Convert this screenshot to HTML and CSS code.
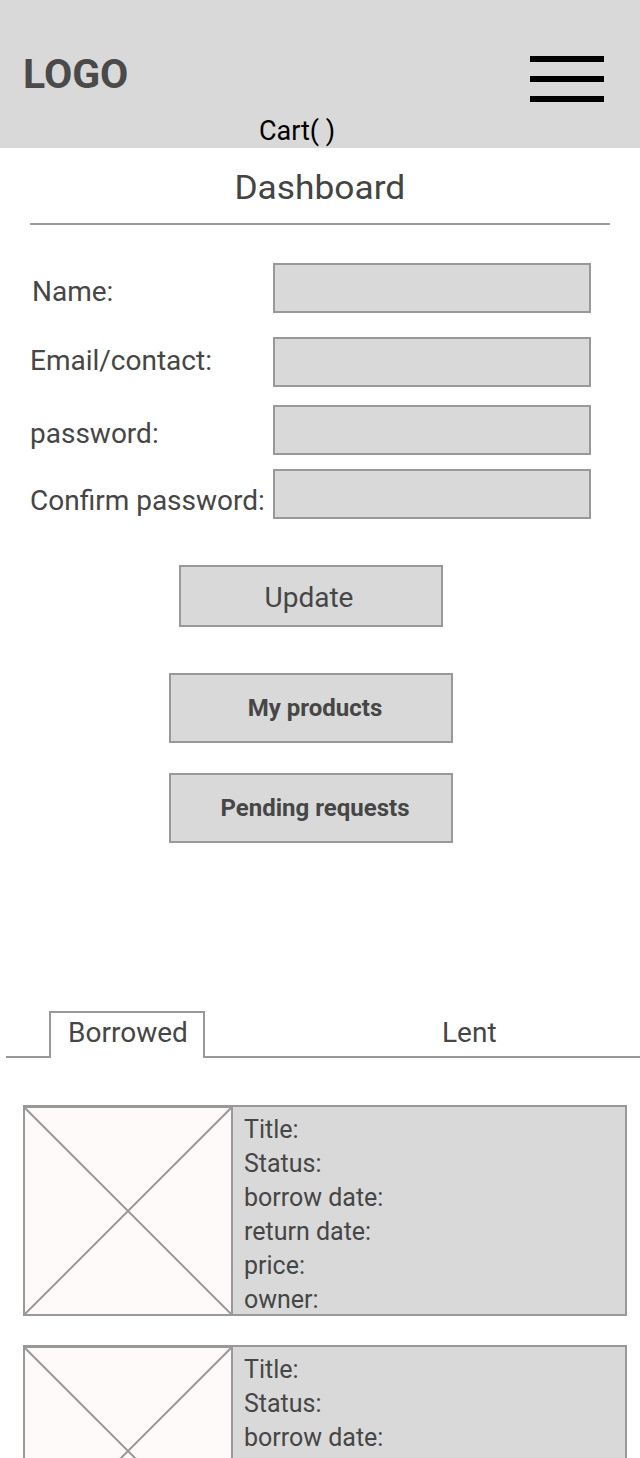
FILE: index.html
```html
<!DOCTYPE html>
<html lang="en">
<head>
<meta charset="utf-8">
<title>Dashboard</title>
<link rel="stylesheet" href="styles.css">
</head>
<body>
<header class="topbar">
  <div class="topbar-row">
    <div class="logo">LOGO</div>
    <div class="burger" aria-label="Menu"><span></span><span></span><span></span></div>
  </div>
  <div class="cart">Cart( )</div>
</header>
<main>
  <div class="heading"><h1 class="heading-title">Dashboard</h1></div>

  <form class="profile-form">
    <div class="field field-name"><label class="field-label">Name:</label><div class="field-input"></div></div>
    <div class="field field-email"><label class="field-label">Email/contact:</label><div class="field-input"></div></div>
    <div class="field field-password"><label class="field-label">password:</label><div class="field-input"></div></div>
    <div class="field field-confirm"><label class="field-label">Confirm password:</label><div class="field-input"></div></div>
  </form>

  <div class="actions">
    <button class="btn btn-update" type="button">Update</button>
    <button class="btn btn-nav btn-products" type="button">My products</button>
    <button class="btn btn-nav btn-pending" type="button">Pending requests</button>
  </div>

  <div class="tabs">
    <div class="tab tab-active">Borrowed</div>
    <div class="tab tab-plain">Lent</div>
  </div>

  <div class="cards">
    <div class="card">
      <div class="thumb">
        <svg class="thumb-x" viewBox="0 0 100 100" preserveAspectRatio="none">
          <line x1="0" y1="0" x2="100" y2="100" stroke="#999" stroke-width="2" vector-effect="non-scaling-stroke"/>
          <line x1="100" y1="0" x2="0" y2="100" stroke="#999" stroke-width="2" vector-effect="non-scaling-stroke"/>
        </svg>
      </div>
      <div class="info">
        <div>Title:</div>
        <div>Status:</div>
        <div>borrow date:</div>
        <div>return date:</div>
        <div>price:</div>
        <div>owner:</div>
      </div>
    </div>
    <div class="card">
      <div class="thumb">
        <svg class="thumb-x" viewBox="0 0 100 100" preserveAspectRatio="none">
          <line x1="0" y1="0" x2="100" y2="100" stroke="#999" stroke-width="2" vector-effect="non-scaling-stroke"/>
          <line x1="100" y1="0" x2="0" y2="100" stroke="#999" stroke-width="2" vector-effect="non-scaling-stroke"/>
        </svg>
      </div>
      <div class="info">
        <div>Title:</div>
        <div>Status:</div>
        <div>borrow date:</div>
        <div>return date:</div>
        <div>price:</div>
        <div>owner:</div>
      </div>
    </div>
  </div>
</main>
</body>
</html>
```
FILE: styles.css
```css
html, body {
  margin: 0;
  padding: 0;
}
body {
  font-family: Roboto, "Liberation Sans", sans-serif;
  color: #464646;
  background: #fff;
}

/* ---------- top bar ---------- */
.topbar {
  background: #d9d9d9;
  height: 148px;
  box-sizing: border-box;
  padding-top: 54px;
}
.topbar-row {
  display: flex;
  justify-content: space-between;
  align-items: flex-start;
  padding: 0 36px 0 23px;
}
.logo {
  font-weight: 700;
  font-size: 41px;
  line-height: 40px;
  color: #4a4a4a;
}
.burger {
  display: flex;
  flex-direction: column;
  gap: 14px;
  margin-top: 2px;
}
.burger span {
  display: block;
  width: 74px;
  height: 6px;
  background: #000;
}
.cart {
  margin-top: 16px;
  font-size: 27px;
  line-height: 27px;
  color: #000;
  text-align: center;
  padding-right: 46px;
}

/* ---------- heading ---------- */
.heading {
  margin: 25px 30px 0;
  padding-bottom: 20px;
  border-bottom: 2px solid #999;
  text-align: center;
}
.heading-title {
  display: inline-block;
  margin: 0;
  font-size: 33px;
  line-height: 30px;
  font-weight: 400;
  color: #444;
  transform: scaleX(1.07);
}

/* ---------- form ---------- */
.profile-form {
  padding: 38px 49px 0 30px;
  margin: 0;
}
.field {
  display: flex;
  align-items: flex-start;
}
.field-label {
  flex: 0 0 243px;
  font-size: 28px;
  line-height: 28px;
  margin-top: 15px;
  white-space: nowrap;
}
.field-input {
  box-sizing: border-box;
  width: 318px;
  height: 50px;
  border: 2px solid #999;
  background: #d9d9d9;
}
.field-name .field-label {
  padding-left: 2px;
  flex-basis: 241px;
}
.field-email {
  margin-top: 24px;
}
.field-email .field-label {
  margin-top: 10px;
}
.field-password {
  margin-top: 18px;
}
.field-password .field-label {
  margin-top: 15px;
}
.field-confirm {
  margin-top: 14px;
}
.field-confirm .field-label {
  margin-top: 18px;
}

/* ---------- action buttons ---------- */
.actions {
  display: flex;
  flex-direction: column;
  align-items: center;
  padding-right: 18px;
  margin-top: 46px;
}
.btn {
  box-sizing: border-box;
  border: 2px solid #999;
  background: #d9d9d9;
  display: flex;
  align-items: center;
  justify-content: center;
  font-family: inherit;
  color: #464646;
  padding: 0;
  margin: 0;
  border-radius: 0;
}
.btn-update {
  width: 264px;
  height: 62px;
  font-size: 28px;
  line-height: 28px;
  font-weight: 400;
  padding-top: 4px;
  padding-right: 4px;
}
.btn-nav {
  width: 284px;
  height: 70px;
  font-size: 24px;
  line-height: 24px;
  font-weight: 700;
  padding-left: 8px;
}
.btn-products {
  margin-top: 46px;
}
.btn-pending {
  margin-top: 30px;
}

/* ---------- tabs ---------- */
.tabs {
  margin: 168px 0 0 6px;
  border-bottom: 2px solid #999;
  display: flex;
  align-items: flex-end;
}
.tab {
  box-sizing: border-box;
  border: 2px solid transparent;
  border-bottom: none;
  font-size: 28px;
  line-height: 28px;
  padding: 6px 0 11px;
  margin-bottom: -2px;
}
.tab-active {
  width: 156px;
  margin-left: 43px;
  border-color: #999;
  background: #fff;
  text-align: center;
  padding-left: 2px;
}
.tab-plain {
  margin-left: 235px;
  background: transparent;
}

/* ---------- cards ---------- */
.cards {
  padding: 47px 13px 0 23px;
  display: flex;
  flex-direction: column;
  gap: 29px;
}
.card {
  box-sizing: border-box;
  height: 211px;
  border: 2px solid #999;
  display: flex;
  overflow: hidden;
}
.thumb {
  flex: 0 0 208px;
  box-sizing: border-box;
  background: #fefaf9;
  border-right: 2px solid #999;
  border-top: 1px solid #999;
}
.thumb-x {
  display: block;
  width: 100%;
  height: 100%;
}
.info {
  flex: 1;
  background: #d9d9d9;
  padding: 6px 0 0 11px;
  font-size: 25px;
  line-height: 34px;
}
```
